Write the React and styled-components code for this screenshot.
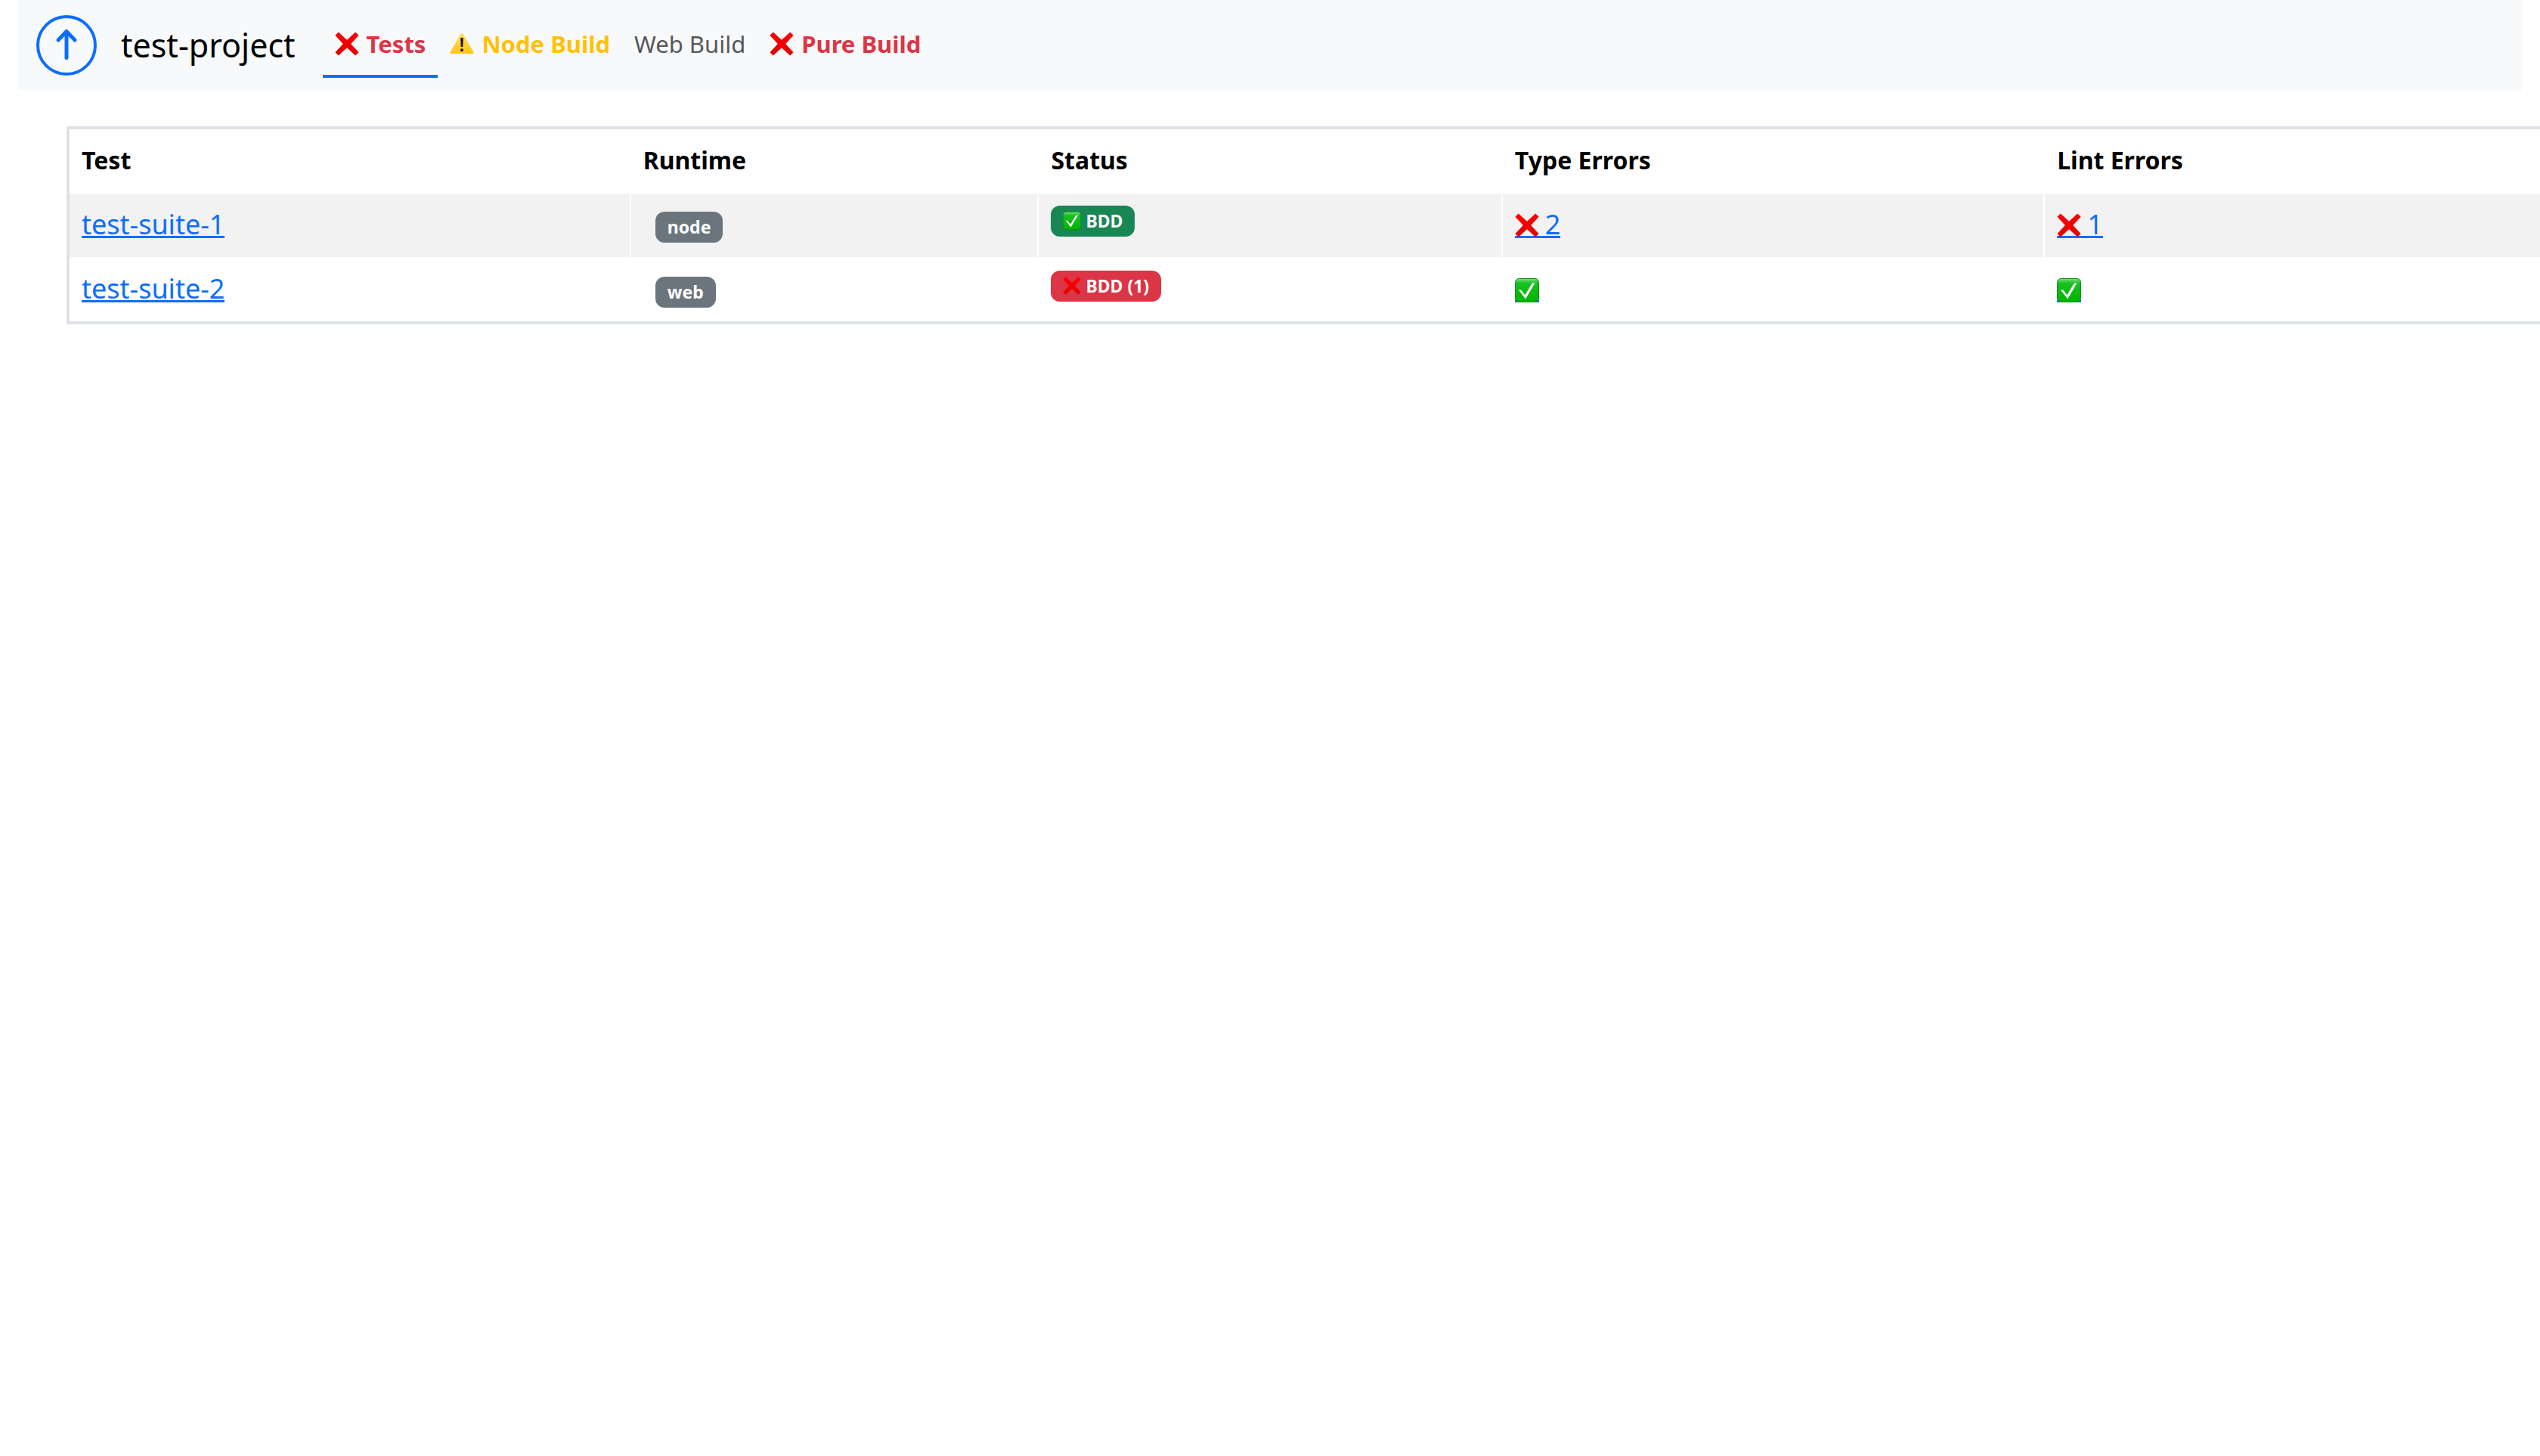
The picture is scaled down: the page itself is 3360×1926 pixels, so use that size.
import React from "react";
import styled, { createGlobalStyle } from "styled-components";

const GlobalStyle = createGlobalStyle`
  *, *::before, *::after { box-sizing: border-box; }
  body {
    margin: 0;
    background: #fff;
    color: #000;
    font-family: "Noto Sans", "Open Sans", sans-serif;
    font-size: 32px;
  }
`;

const Page = styled.div`
  overflow-x: clip;
`;

const Header = styled.header`
  display: flex;
  align-items: center;
  min-height: 119px;
  margin: 0 24px;
  padding: 16px 24px;
  background: #f8f9fa;
`;

const UpButton = styled.button`
  display: grid;
  place-items: center;
  width: 80px;
  height: 80px;
  padding: 0;
  border: 4px solid #0d6efd;
  border-radius: 50%;
  background: transparent;
  color: #0d6efd;
`;

const Title = styled.h1`
  margin: 0 36px 0 32px;
  font-size: 43px;
  font-weight: 400;
  line-height: 60px;
`;

const Tabs = styled.nav`
  display: flex;
`;

const tones = { danger: "#dc3545", warning: "#ffc107", plain: "#565758" };

const Tab = styled.a`
  display: flex;
  align-items: center;
  gap: 10px;
  height: 87px;
  padding: 0 16px;
  border-bottom: 4px solid ${(p) => (p.$active ? "#0d6efd" : "transparent")};
  color: ${(p) => tones[p.$tone]};
  font-size: 31px;
  font-weight: ${(p) => (p.$tone === "plain" ? 400 : 700)};
  line-height: 40px;
  text-decoration: none;
`;

const Main = styled.main`
  padding: 48px 0 0 88px;
`;

const Table = styled.table`
  width: 100vw;
  table-layout: fixed;
  border: 4px solid #dee2e6;
  border-collapse: separate;
  border-spacing: 0;
`;

const Column = styled.col`
  width: ${(p) => p.$width};
`;

const HeadCell = styled.th`
  height: 85px;
  padding: 16px;
  font-size: 32px;
  font-weight: 700;
  line-height: 50px;
  text-align: left;
  vertical-align: top;
  & + & { border-left: 2px solid #fff; }
`;

const Row = styled.tr`
  background: ${(p) => (p.$striped ? "#f2f2f2" : "#fff")};
`;

const Cell = styled.td`
  height: ${(p) => (p.$last ? "83px" : "86px")};
  padding: 16px;
  border-bottom: ${(p) => (p.$last ? "0" : "2px solid #fff")};
  vertical-align: ${(p) => (p.$top ? "top" : "middle")};
  & + & { border-left: 2px solid #fff; }
`;

const Link = styled.a`
  display: flex;
  align-items: center;
  gap: 8px;
  width: max-content;
  min-height: 33px;
  background: linear-gradient(#0d6efd, #0d6efd) left bottom / 100% 3px no-repeat;
  color: #0d6efd;
  font-size: 36px;
  line-height: 28px;
  text-decoration: none;
`;

const LinkText = styled.span`
  padding-bottom: 3px;
`;

const badgeColors = { neutral: "#6c757d", success: "#198754", danger: "#dc3545" };

const Badge = styled.span`
  display: flex;
  align-items: center;
  gap: 6px;
  width: max-content;
  height: 41px;
  margin: ${(p) => (p.$tone === "neutral" ? "8px 0 0 16px" : "0")};
  padding: 0 16px 2px;
  border-radius: 12px;
  background: ${(p) => badgeColors[p.$tone]};
  color: #fff;
  font-size: 23px;
  font-weight: 700;
  line-height: 24px;
`;

function ArrowUp() {
  return (
    <svg width="48" height="48" viewBox="0 0 48 48" fill="none" stroke="currentColor" strokeWidth="5" strokeLinecap="round" strokeLinejoin="round" aria-hidden="true">
      <path d="M24 40.500V5.500M13 17 24 5.500l11 11.500" />
    </svg>
  );
}

function Cross({ size = 32 }) {
  return (
    <svg width={size} height={size} viewBox="0 0 32 32" aria-hidden="true">
      <defs>
        <linearGradient id="cross" x1="0" y1="0" x2="0" y2="1">
          <stop offset="0" stopColor="#ff0000" />
          <stop offset="1" stopColor="#e20000" />
        </linearGradient>
      </defs>
      <path d="M4.8.4 16 10.800 27.200.4 31.600 4.800 21.200 16l10.400 11.200-4.400 4.400L16 21.200 4.800 31.600.4 27.200 10.800 16 .4 4.800z" fill="url(#cross)" />
    </svg>
  );
}

function Check({ size = 32 }) {
  return (
    <svg width={size} height={size} viewBox="0 0 32 32" aria-hidden="true">
      <defs>
        <linearGradient id="check" x1="0" y1="0" x2="0" y2="1">
          <stop offset="0" stopColor="#7fe07f" />
          <stop offset=".2" stopColor="#18c020" />
          <stop offset="1" stopColor="#00b400" />
        </linearGradient>
      </defs>
      <rect x=".5" y=".5" width="31" height="31" rx="5" fill="url(#check)" stroke="#128a1c" />
      <path d="M5 15.500h3.200l5.200 6.800L22.800 6.500h3.700L14 27.500z" fill="#fff" />
    </svg>
  );
}

function Warning({ size = 32 }) {
  return (
    <svg width={size} height={size} viewBox="0 0 32 32" aria-hidden="true">
      <defs>
        <linearGradient id="warning" x1="0" y1="0" x2="0" y2="1">
          <stop offset="0" stopColor="#ffdf52" />
          <stop offset="1" stopColor="#ffc61a" />
        </linearGradient>
      </defs>
      <path d="M14.800 2.600q1.200-1.600 2.400 0L31.600 27.200q.6 1.800-1.300 1.800H1.700q-1.900 0-1.300-1.800z" fill="url(#warning)" />
      <path d="M14.200 8.500q1.800-1.400 3.600 0L17.200 20h-2.400z" fill="#14120a" />
      <circle cx="16" cy="24.200" r="1.900" fill="#14120a" />
    </svg>
  );
}

function ErrorLink({ label, count }) {
  return (
    <Link href="#details" aria-label={`${label}: ${count}`}>
      {count > 0 ? <Cross /> : <Check />}
      {count > 0 && <LinkText>{count}</LinkText>}
    </Link>
  );
}

const suites = [
  { name: "test-suite-1", runtime: "node", passed: true, status: "BDD", types: 2, lint: 1 },
  { name: "test-suite-2", runtime: "web", passed: false, status: "BDD (1)", types: 0, lint: 0 },
];

export default function App() {
  return (
    <Page>
      <GlobalStyle />
      <Header>
        <UpButton type="button" aria-label="Up"><ArrowUp /></UpButton>
        <Title>test-project</Title>
        <Tabs>
          <Tab href="#tests" $tone="danger" $active><Cross />Tests</Tab>
          <Tab href="#node" $tone="warning"><Warning />Node Build</Tab>
          <Tab href="#web" $tone="plain">Web Build</Tab>
          <Tab href="#pure" $tone="danger"><Cross />Pure Build</Tab>
        </Tabs>
      </Header>
      <Main>
        <Table>
          <colgroup>
            <Column $width="22.1%" />
            <Column $width="16.1%" />
            <Column $width="18.3%" />
            <Column $width="21.4%" />
            <Column />
          </colgroup>
          <thead>
            <tr>
              <HeadCell scope="col">Test</HeadCell>
              <HeadCell scope="col">Runtime</HeadCell>
              <HeadCell scope="col">Status</HeadCell>
              <HeadCell scope="col">Type Errors</HeadCell>
              <HeadCell scope="col">Lint Errors</HeadCell>
            </tr>
          </thead>
          <tbody>
            {suites.map((s, i) => {
              const last = i === suites.length - 1;
              return (
                <Row key={s.name} $striped={i % 2 === 0}>
                  <Cell $last={last}><Link href={`#${s.name}`}><LinkText>{s.name}</LinkText></Link></Cell>
                  <Cell $last={last} $top><Badge $tone="neutral">{s.runtime}</Badge></Cell>
                  <Cell $last={last} $top>
                    <Badge $tone={s.passed ? "success" : "danger"}>
                      {s.passed ? <Check size={24} /> : <Cross size={24} />}
                      {s.status}
                    </Badge>
                  </Cell>
                  <Cell $last={last}><ErrorLink label="Type errors" count={s.types} /></Cell>
                  <Cell $last={last}><ErrorLink label="Lint errors" count={s.lint} /></Cell>
                </Row>
              );
            })}
          </tbody>
        </Table>
      </Main>
    </Page>
  );
}
